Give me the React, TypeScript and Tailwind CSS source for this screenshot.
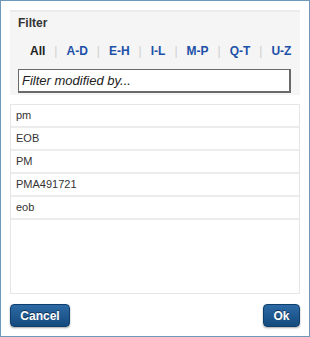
import React from "react";

const letters = ["A-D", "E-H", "I-L", "M-P", "Q-T", "U-Z"];
const items = ["pm", "EOB", "PM", "PMA491721", "eob"];

export default function App() {
  return (
    <div
      className="w-[310px] h-[337px] bg-white border border-[#6f97b8] flex flex-col px-[9px] pt-[9px] pb-[9px]"
      style={{ fontFamily: '"Liberation Sans", Arial, sans-serif' }}
    >
      <div className="bg-[#f5f5f5] border-t-2 border-[#ebebeb] h-[85px] pl-[8px] pr-[8px] flex flex-col">
        <div className="text-[12px] font-bold text-[#333] mt-[4px] leading-[14px]">Filter</div>
        <div className="flex items-center mt-[14px] ml-[12px] text-[12px] font-bold leading-[14px]">
          <span className="text-[#222]">All</span>
          {letters.map((l) => (
            <React.Fragment key={l}>
              <span className="text-[#d0d0d0] font-normal mx-[9px]">|</span>
              <span className="text-[#1c50a8]">{l}</span>
            </React.Fragment>
          ))}
        </div>
        <div className="mt-[11px] h-[24px] w-[273px] bg-white border border-[#6a6a6a] border-r-2 border-b-2 flex items-center pl-[3px] text-[13px] italic text-[#222]">
          Filter modified by...
        </div>
      </div>
      <div className="mt-[9px] h-[191px] border border-[#e6e6e6] bg-white flex flex-col">
        {items.map((it) => (
          <div
            key={it}
            className="h-[23px] border-b-2 border-[#ececec] flex items-center pl-[5px] text-[11px] text-[#333]"
          >
            {it}
          </div>
        ))}
      </div>
      <div className="mt-[10px] flex justify-between">
        <button className="w-[60px] h-[23px] rounded-[4px] bg-gradient-to-b from-[#2d6aa5] to-[#134a7e] border border-[#0e3e6b] text-white text-[12px] font-bold [text-shadow:0_-1px_0_rgba(0,0,0,0.5)] shadow-[0_1px_2px_rgba(0,0,0,0.35)]">
          Cancel
        </button>
        <button className="w-[37px] h-[23px] rounded-[4px] bg-gradient-to-b from-[#2d6aa5] to-[#134a7e] border border-[#0e3e6b] text-white text-[12px] font-bold [text-shadow:0_-1px_0_rgba(0,0,0,0.5)] shadow-[0_1px_2px_rgba(0,0,0,0.35)]">
          Ok
        </button>
      </div>
    </div>
  );
}
